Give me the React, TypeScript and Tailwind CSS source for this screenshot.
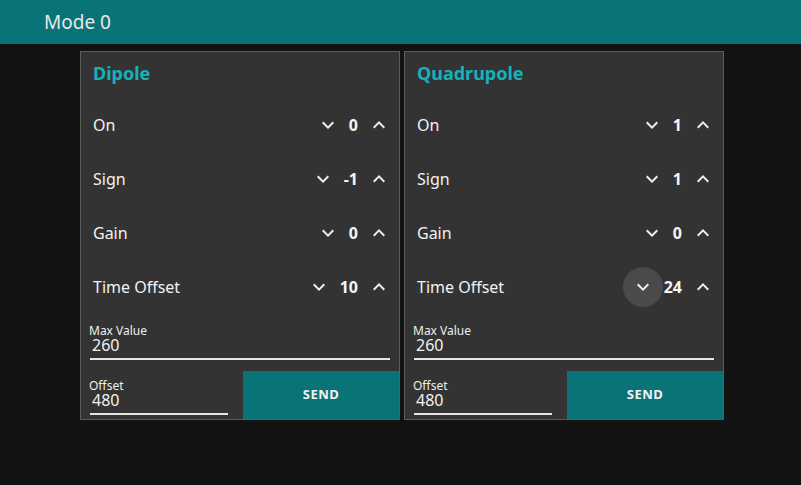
import React, { useState } from 'react';

type Field = { label: string; value: number };

const ChevronDown = () => (
  <svg viewBox="0 0 24 24" width="24" height="24" fill="currentColor">
    <path d="M16.59 8.59L12 13.17 7.41 8.59 6 10l6 6 6-6z" />
  </svg>
);

const ChevronUp = () => (
  <svg viewBox="0 0 24 24" width="24" height="24" fill="currentColor">
    <path d="M12 8l-6 6 1.41 1.41L12 10.83l4.59 4.58L18 14z" />
  </svg>
);

const Stepper: React.FC<{ label: string; value: number; hover?: boolean }> = ({ label, value, hover }) => (
  <div className="flex items-center h-[54px] pl-3">
    <span className="flex-1 text-[16px] text-[#f2f2f2]">{label}</span>
    <button
      className={`w-10 h-10 rounded-full flex items-center justify-center text-[#eeeeee] ${hover ? 'bg-[#4a4a4a]' : ''}`}
    >
      <ChevronDown />
    </button>
    <span className="px-[1px] text-[16px] font-bold text-[#f5f5f5]">{value}</span>
    <button className="w-10 h-10 rounded-full flex items-center justify-center text-[#eeeeee]">
      <ChevronUp />
    </button>
  </div>
);

const TextField: React.FC<{ label: string; value: string; className?: string }> = ({ label, value, className }) => (
  <div className={`flex flex-col ${className ?? ''}`}>
    <span className="text-[12px] leading-[12px] text-[#eeeeee] pl-[8px]">{label}</span>
    <span className="text-[16px] leading-[16px] text-[#f2f2f2] pl-[11px]">{value}</span>
    <div className="ml-[9px] mt-[5px] h-[2px] bg-[#e6e6e6]" />
  </div>
);

const Panel: React.FC<{ title: string; rows: Field[]; hoverRow?: number }> = ({ title, rows, hoverRow }) => (
  <div className="w-[320px] h-[369px] border border-[#5c5c5c] bg-[#333333] flex flex-col">
    <div className="h-[46px] flex items-center pl-3 pb-[3px]">
      <span className="text-[18px] font-bold text-[#17b1bb]">{title}</span>
    </div>
    {rows.map((r, i) => (
      <Stepper key={r.label} label={r.label} value={r.value} hover={i === hoverRow} />
    ))}
    <div className="mt-[11px] pr-[9px]">
      <TextField label="Max Value" value="260" />
    </div>
    <div className="flex mt-auto items-end">
      <TextField label="Offset" value="480" className="w-[147px] pb-[4px]" />
      <button className="ml-auto w-[156px] h-[48px] bg-[#0a7377] text-[13px] font-bold text-[#f2f2f2] tracking-[0.5px]">
        SEND
      </button>
    </div>
  </div>
);

export default function App() {
  const [mode] = useState(0);
  return (
    <div className="w-[801px] h-[485px] bg-[#121212] font-['Noto_Sans',sans-serif]">
      <header className="h-[44px] bg-[#0a7377] flex items-center pl-[44px]">
        <span className="text-[19px] text-[#e8e8e8]">Mode {mode}</span>
      </header>
      <div className="flex gap-[4px] pl-[80px] pt-[7px]">
        <Panel
          title="Dipole"
          rows={[
            { label: 'On', value: 0 },
            { label: 'Sign', value: -1 },
            { label: 'Gain', value: 0 },
            { label: 'Time Offset', value: 10 },
          ]}
        />
        <Panel
          title="Quadrupole"
          hoverRow={3}
          rows={[
            { label: 'On', value: 1 },
            { label: 'Sign', value: 1 },
            { label: 'Gain', value: 0 },
            { label: 'Time Offset', value: 24 },
          ]}
        />
      </div>
    </div>
  );
}
